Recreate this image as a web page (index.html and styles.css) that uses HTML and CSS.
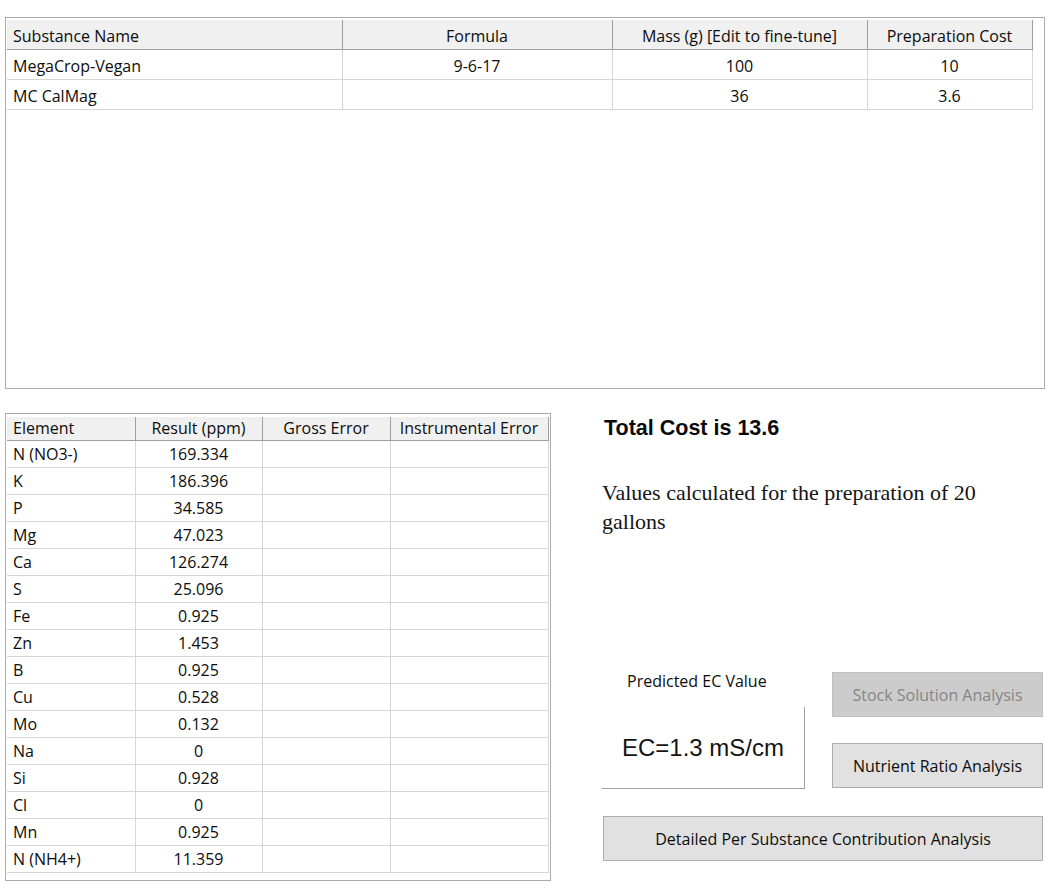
FILE: index.html
```html
<!DOCTYPE html>
<html lang="en">
<head>
<meta charset="utf-8">
<title>Nutrient Calculator Results</title>
<link rel="stylesheet" href="styles.css">
</head>
<body>
<div class="app">
  <section class="grid-panel top-panel">
    <table class="grid subst">
      <colgroup>
        <col class="c-name"><col class="c-formula"><col class="c-mass"><col class="c-cost">
      </colgroup>
      <thead>
        <tr><th class="left">Substance Name</th><th>Formula</th><th>Mass (g) [Edit to fine-tune]</th><th>Preparation Cost</th></tr>
      </thead>
      <tbody>
        <tr><td class="left">MegaCrop-Vegan</td><td>9-6-17</td><td>100</td><td>10</td></tr>
        <tr><td class="left">MC CalMag</td><td></td><td>36</td><td>3.6</td></tr>
      </tbody>
    </table>
  </section>

  <div class="lower">
    <section class="grid-panel elem-panel">
      <table class="grid elem">
        <colgroup>
          <col class="e-el"><col class="e-res"><col class="e-gross"><col class="e-inst">
        </colgroup>
        <thead>
          <tr><th class="left">Element</th><th>Result (ppm)</th><th>Gross Error</th><th>Instrumental Error</th></tr>
        </thead>
        <tbody>
          <tr><td class="left">N (NO3-)</td><td>169.334</td><td></td><td></td></tr>
          <tr><td class="left">K</td><td>186.396</td><td></td><td></td></tr>
          <tr><td class="left">P</td><td>34.585</td><td></td><td></td></tr>
          <tr><td class="left">Mg</td><td>47.023</td><td></td><td></td></tr>
          <tr><td class="left">Ca</td><td>126.274</td><td></td><td></td></tr>
          <tr><td class="left">S</td><td>25.096</td><td></td><td></td></tr>
          <tr><td class="left">Fe</td><td>0.925</td><td></td><td></td></tr>
          <tr><td class="left">Zn</td><td>1.453</td><td></td><td></td></tr>
          <tr><td class="left">B</td><td>0.925</td><td></td><td></td></tr>
          <tr><td class="left">Cu</td><td>0.528</td><td></td><td></td></tr>
          <tr><td class="left">Mo</td><td>0.132</td><td></td><td></td></tr>
          <tr><td class="left">Na</td><td>0</td><td></td><td></td></tr>
          <tr><td class="left">Si</td><td>0.928</td><td></td><td></td></tr>
          <tr><td class="left">Cl</td><td>0</td><td></td><td></td></tr>
          <tr><td class="left">Mn</td><td>0.925</td><td></td><td></td></tr>
          <tr><td class="left">N (NH4+)</td><td>11.359</td><td></td><td></td></tr>
        </tbody>
      </table>
    </section>

    <aside class="summary">
      <h2 class="total">Total Cost is 13.6</h2>
      <p class="note">Values calculated for the preparation of 20 gallons</p>
      <div class="ec-area">
        <div class="ec-col">
          <div class="ec-label">Predicted EC Value</div>
          <div class="ec-box">EC=1.3 mS/cm</div>
        </div>
        <div class="btn-col">
          <button class="btn btn-disabled" disabled>Stock Solution Analysis</button>
          <button class="btn btn-ratio">Nutrient Ratio Analysis</button>
        </div>
      </div>
      <button class="btn btn-wide">Detailed Per Substance Contribution Analysis</button>
    </aside>
  </div>
</div>
</body>
</html>
```

FILE: styles.css
```css
* { box-sizing: border-box; }

body {
  margin: 0;
  background: #ffffff;
  font-family: "Open Sans", "Noto Sans", sans-serif;
  font-size: 16px;
  color: #0d0d0d;
}

.app {
  padding: 17px 8px 0 5px;
}

.grid-panel {
  border: 1px solid #ababab;
  background: #ffffff;
  padding: 2px 0 0 1px;
}

.top-panel {
  height: 372px;
}

.grid {
  border-collapse: collapse;
  table-layout: fixed;
}

.grid th,
.grid td {
  padding: 0 6px;
  text-align: center;
  white-space: nowrap;
  overflow: hidden;
  font-weight: 400;
}

.grid th {
  background: #f0f0f0;
  border-right: 1px solid #9e9e9e;
  border-bottom: 1px solid #9e9e9e;
}

.grid td {
  border-right: 1px solid #d6d6d6;
  border-bottom: 1px solid #d6d6d6;
}

.grid .left {
  text-align: left;
}

.subst {
  width: 1025px;
}
.subst thead tr { height: 29px; }
.subst tbody tr { height: 30px; }
.subst th, .subst td { padding-top: 3px; }
.c-name { width: 335px; }
.c-formula { width: 270px; }
.c-mass { width: 255px; }
.c-cost { width: 165px; }

.lower {
  display: flex;
  margin-top: 24px;
}

.elem-panel {
  width: 546px;
  height: 468px;
  padding-top: 3px;
}

.elem {
  width: 541px;
}
.elem thead tr { height: 23px; }
.elem tbody tr { height: 27px; }
.e-el { width: 128px; }
.e-res { width: 127px; }
.e-gross { width: 128px; }
.e-inst { width: 158px; }

.summary {
  margin-left: 51px;
  width: 441px;
  display: flex;
  flex-direction: column;
}

.total {
  margin: 2px 0 0;
  font-family: "Liberation Sans", Arial, sans-serif;
  font-weight: 700;
  font-size: 21.5px;
  line-height: 26px;
  color: #0a0a0a;
  padding-left: 2px;
}

.note {
  margin: 37px 0 0;
  width: 420px;
  font-family: "Liberation Serif", "Times New Roman", serif;
  font-size: 22px;
  line-height: 29px;
  color: #141414;
}

.ec-area {
  display: flex;
  gap: 27px;
  margin-top: 134px;
}

.ec-col {
  width: 203px;
  display: flex;
  flex-direction: column;
}

.ec-label {
  line-height: 22px;
  padding-left: 25px;
}

.ec-box {
  margin-top: 15px;
  height: 82px;
  border-right: 1px solid #a0a0a0;
  border-bottom: 1px solid #a0a0a0;
  display: flex;
  align-items: center;
  justify-content: center;
  font-family: "Liberation Sans", Arial, sans-serif;
  font-size: 24px;
  color: #141414;
}

.btn-col {
  width: 211px;
  display: flex;
  flex-direction: column;
}

.btn {
  height: 45px;
  border: 1px solid #adadad;
  background: #e1e1e1;
  font-family: "Open Sans", "Noto Sans", sans-serif;
  font-size: 16px;
  color: #0d0d0d;
  padding: 0;
  border-radius: 0;
}

.btn-disabled {
  margin-top: 2px;
  background: #cccccc;
  border-color: #bfbfbf;
  color: #868686;
}

.btn-ratio {
  margin-top: 26px;
}

.btn-wide {
  margin-top: 27px;
  margin-left: 1px;
  width: 440px;
}
```
